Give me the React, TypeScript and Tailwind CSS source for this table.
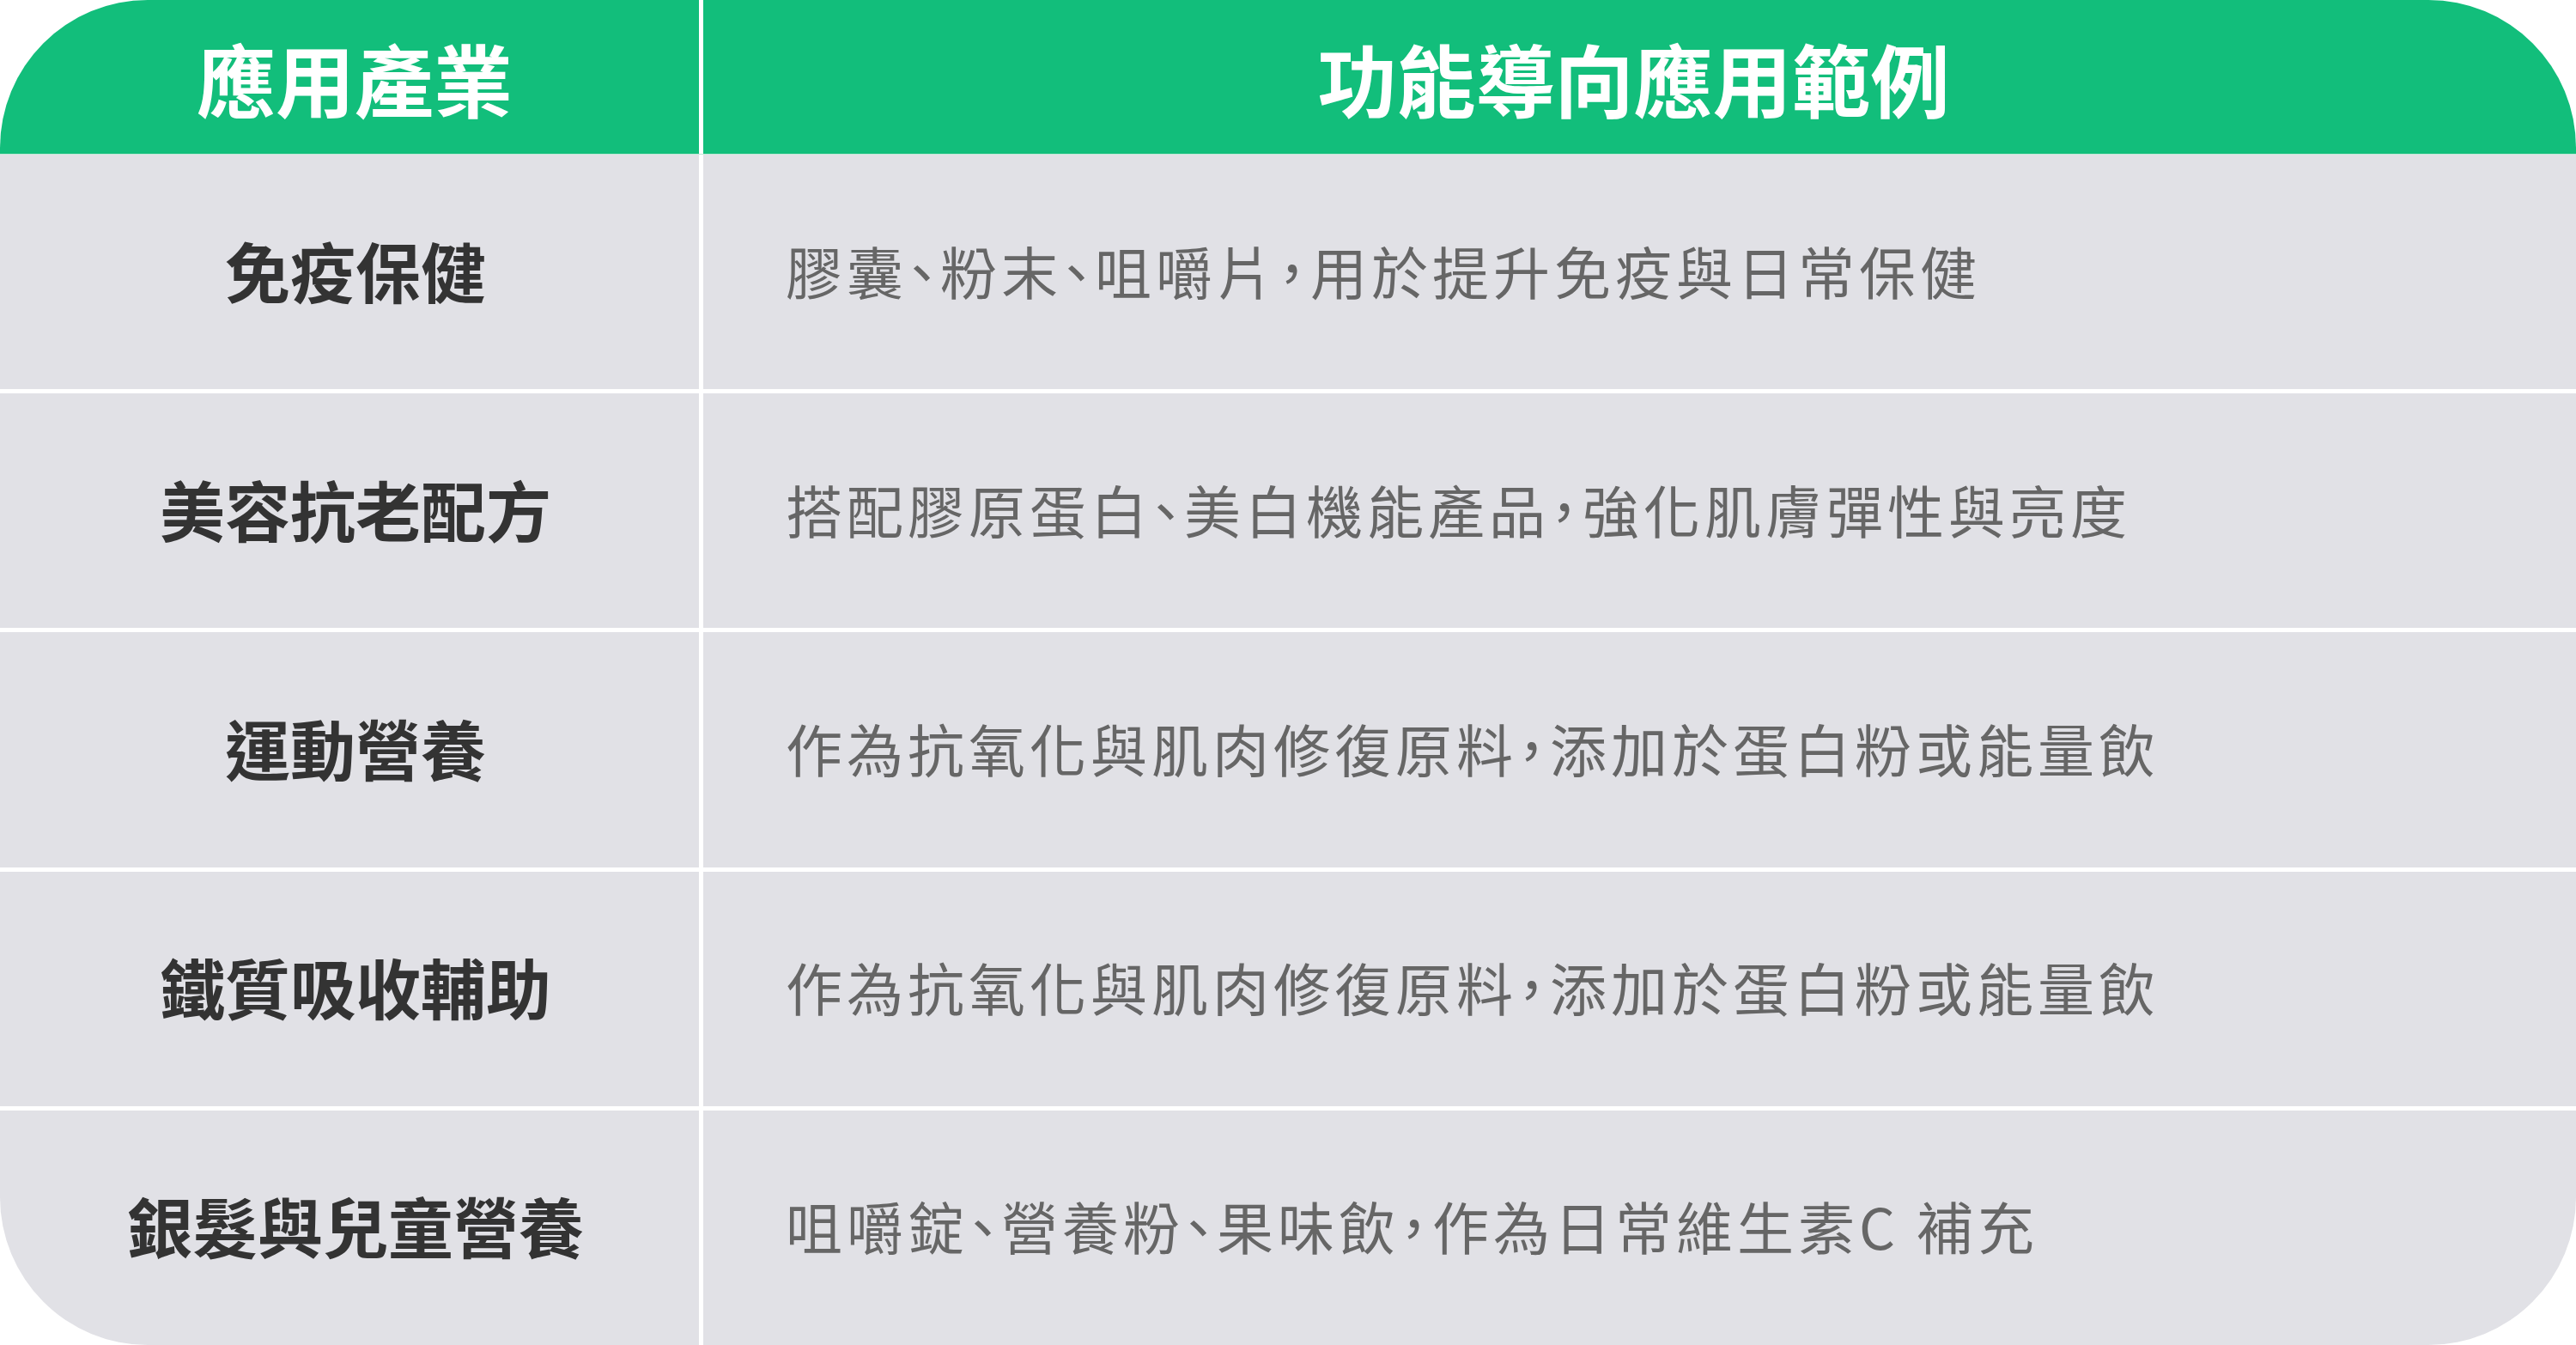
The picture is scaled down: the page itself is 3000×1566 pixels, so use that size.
import React from 'react';

const rows = [
  { industry: '免疫保健', example: '膠囊、粉末、咀嚼片，用於提升免疫與日常保健' },
  { industry: '美容抗老配方', example: '搭配膠原蛋白、美白機能產品，強化肌膚彈性與亮度' },
  { industry: '運動營養', example: '作為抗氧化與肌肉修復原料，添加於蛋白粉或能量飲' },
  { industry: '鐵質吸收輔助', example: '作為抗氧化與肌肉修復原料，添加於蛋白粉或能量飲' },
  { industry: '銀髮與兒童營養', example: '咀嚼錠、營養粉、果味飲，作為日常維生素C 補充' },
];

export default function App() {
  return (
    <div className="w-[3000px] h-[1566px] bg-white font-['Noto_Sans_CJK_TC','Noto_Sans',sans-serif]">
      <div className="w-full h-full rounded-[172px] overflow-hidden flex flex-col bg-white">
        {/* header */}
        <div className="h-[180px] flex gap-[5px] border-b border-[#bfe9d6]">
          <div className="w-[814px] bg-[#12be7b] flex items-center justify-center pl-[12px]">
            <span className="text-[92px] font-bold text-white leading-none">應用產業</span>
          </div>
          <div className="flex-1 bg-[#12be7b] flex items-center justify-center pr-[14px]">
            <span className="text-[92px] font-bold text-white leading-none">功能導向應用範例</span>
          </div>
        </div>

        {/* body */}
        <div className="flex-1 flex flex-col gap-[5px]">
          {rows.map((row, i) => (
            <div key={i} className="flex-1 flex gap-[5px]">
              <div className="w-[814px] bg-[#e1e1e6] flex items-center justify-center pl-[14px] pb-[6px]">
                <span className="text-[76px] font-bold text-[#333333] leading-none">{row.industry}</span>
              </div>
              <div className="flex-1 bg-[#e1e1e6] flex items-center pl-[96px] pb-[6px]">
                <span className="text-[66px] text-[#666666] leading-none tracking-[5px] [font-feature-settings:'palt']">
                  {row.example}
                </span>
              </div>
            </div>
          ))}
        </div>
      </div>
    </div>
  );
}
